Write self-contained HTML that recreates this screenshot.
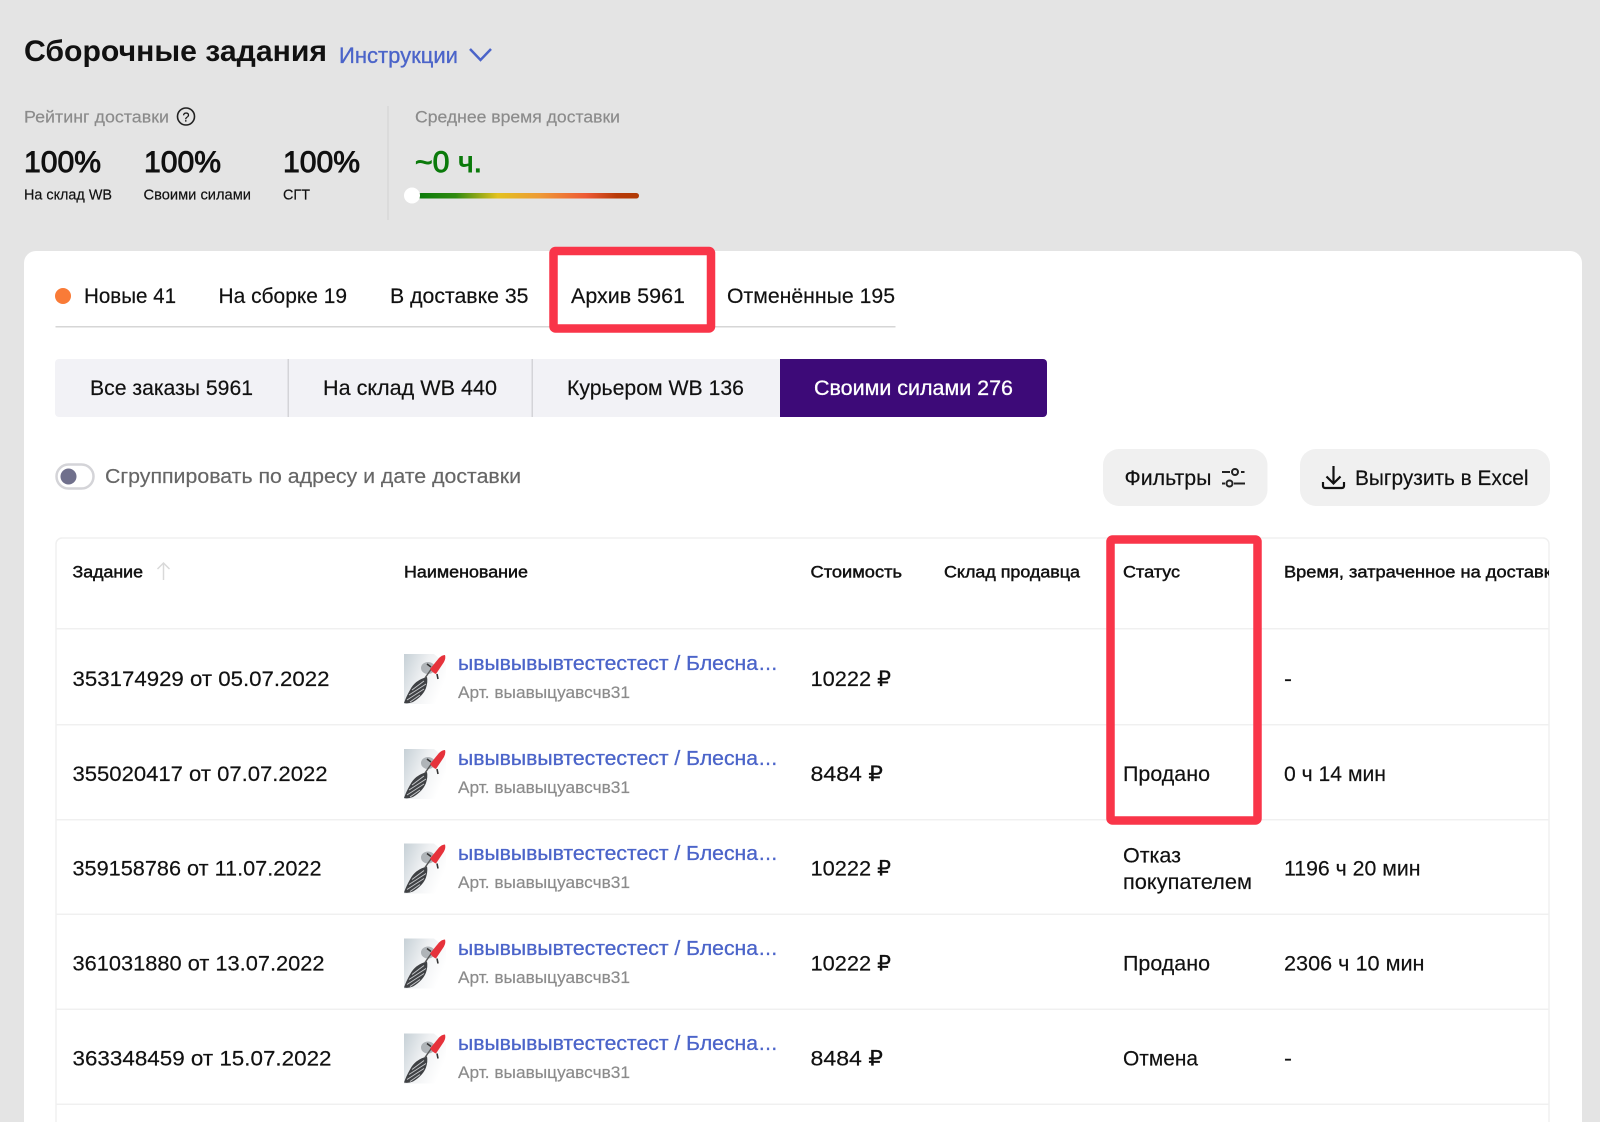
<!DOCTYPE html>
<html lang="ru"><head><meta charset="utf-8"><title>Сборочные задания</title>
<style>
html,body{margin:0;padding:0;background:#e4e4e4;overflow:hidden}
svg{display:block;filter:blur(.35px)}
text{font-family:"Liberation Sans","DejaVu Sans",sans-serif;fill:#111;white-space:pre;stroke:#111;stroke-width:.18}
.m{stroke:#111;stroke-width:.9}
.h{font-size:16.5px;stroke:#111;stroke-width:.45}
.r{font-size:21.5px}
.t{font-size:21px}
.g{font-size:17px;fill:#8b8b8b;stroke:#8b8b8b}
.l{font-size:14.5px}
.link{font-size:20px;fill:#4b64c9;stroke:#4b64c9;stroke-width:.3}
.art{font-size:16.5px;fill:#8b8b8b;stroke:#8b8b8b}
</style></head><body>
<svg width="1600" height="1122" viewBox="0 0 1600 1122" xmlns="http://www.w3.org/2000/svg">
<defs>
<linearGradient id="sl" x1="0" x2="1" y1="0" y2="0">
<stop offset="0" stop-color="#0a7a0a"/><stop offset=".17" stop-color="#2f8a10"/><stop offset=".36" stop-color="#e3c21e"/><stop offset=".55" stop-color="#ee9a35"/><stop offset=".76" stop-color="#ee5a35"/><stop offset=".9" stop-color="#b83a08"/><stop offset="1" stop-color="#b03a05"/>
</linearGradient>
<linearGradient id="th" x1="0" x2="1" y1="0" y2=".5">
<stop offset="0" stop-color="#c6d0d6"/><stop offset=".5" stop-color="#eef0f2"/><stop offset="1" stop-color="#ffffff"/>
</linearGradient>
<clipPath id="tc"><rect x="56" y="538" width="1493" height="584"/></clipPath>
<symbol id="lure" viewBox="0 0 42 50" width="42" height="50">
<path d="M0 0H30L42 10V50H0Z" fill="url(#th)"/>
<ellipse cx="24" cy="14" rx="7" ry="6" fill="#868c91" opacity=".6"/>
<path d="M23 23Q11 26 6 36Q2 43 0 49Q4 50 9 48Q19 42 22 34Q24 28 23 23Z" fill="#3f4144"/>
<path d="M20 27 8 36M22 30 5 41M20 35 3 46M16 41 6 48" stroke="#c4c6c9" stroke-width="1" fill="none"/>
<path d="M21 24 28 14" stroke="#555" stroke-width="1.400"/>
<path d="M26 15 L35 4 Q38 1 41 1 Q42 4 40 8 L32 20 Q29 19 26 15 Z" fill="#e6323b"/>
<path d="M23 10l4 3M33 20l1 5" stroke="#333" stroke-width="1.600" fill="none"/>
</symbol>
</defs>

<rect width="1600" height="1122" fill="#e4e4e4"/>

<!-- Header -->
<text x="24" y="61" font-size="30" font-weight="700" style="stroke-width:0" textLength="303" lengthAdjust="spacingAndGlyphs">Сборочные задания</text>
<text x="339" y="63" font-size="22" style="fill:#4b64c9;stroke:#4b64c9;stroke-width:.3" textLength="119" lengthAdjust="spacingAndGlyphs">Инструкции</text>
<path d="M470 49l10.500 11 10.500-11" fill="none" stroke="#4b64c9" stroke-width="2.500"/>

<text x="24" y="122.500" class="g" textLength="145" lengthAdjust="spacingAndGlyphs">Рейтинг доставки</text>
<circle cx="186" cy="116.500" r="8.500" fill="none" stroke="#222" stroke-width="1.600"/>
<text x="182.500" y="121.500" font-size="13" textLength="7" lengthAdjust="spacingAndGlyphs">?</text>

<text x="24" y="172" font-size="29.500" class="m" textLength="77" lengthAdjust="spacingAndGlyphs">100%</text>
<text x="144" y="172" font-size="29.500" class="m" textLength="77" lengthAdjust="spacingAndGlyphs">100%</text>
<text x="283" y="172" font-size="29.500" class="m" textLength="77" lengthAdjust="spacingAndGlyphs">100%</text>
<text x="24" y="199.500" class="l" textLength="88" lengthAdjust="spacingAndGlyphs">На склад WB</text>
<text x="143.500" y="199.500" class="l" textLength="107.500" lengthAdjust="spacingAndGlyphs">Своими силами</text>
<text x="283" y="199.500" class="l" textLength="27" lengthAdjust="spacingAndGlyphs">СГТ</text>

<rect x="387.500" y="106" width="1" height="114" fill="#d2d2d2"/>
<text x="415" y="122.500" class="g" textLength="205" lengthAdjust="spacingAndGlyphs">Среднее время доставки</text>
<text x="415" y="172" font-size="29.500" style="fill:#0b7a0b;stroke:#0b7a0b;stroke-width:.9" textLength="67" lengthAdjust="spacingAndGlyphs">~0 ч.</text>
<rect x="418" y="193" width="221" height="5.500" rx="2.700" fill="url(#sl)"/>
<circle cx="412" cy="195.500" r="8" fill="#fff"/>

<!-- Card -->
<path d="M36 251H1570a12 12 0 0 1 12 12V1122H24V263a12 12 0 0 1 12-12Z" fill="#fff"/>

<!-- Tabs -->
<circle cx="63" cy="296" r="8" fill="#f97b37"/>
<text x="84" y="303" class="t" textLength="92" lengthAdjust="spacingAndGlyphs">Новые 41</text>
<text x="218.500" y="303" class="t" textLength="128.500" lengthAdjust="spacingAndGlyphs">На сборке 19</text>
<text x="390" y="303" class="t" textLength="138.500" lengthAdjust="spacingAndGlyphs">В доставке 35</text>
<text x="571" y="303" class="t" textLength="114" lengthAdjust="spacingAndGlyphs">Архив 5961</text>
<text x="727" y="303" class="t" textLength="168" lengthAdjust="spacingAndGlyphs">Отменённые 195</text>
<rect x="55.500" y="326" width="840" height="1.500" fill="#d6d6d6"/>

<!-- Segmented -->
<path d="M59 359H780V417H59a4 4 0 0 1-4-4V363a4 4 0 0 1 4-4Z" fill="#f2f2f6"/>
<rect x="287.500" y="359" width="1.500" height="58" fill="#d4d4d8"/>
<rect x="531.500" y="359" width="1.500" height="58" fill="#d4d4d8"/>
<path d="M780 359H1043a4 4 0 0 1 4 4V413a4 4 0 0 1-4 4H780Z" fill="#3d0a78"/>
<text x="90" y="395" class="t" textLength="163" lengthAdjust="spacingAndGlyphs">Все заказы 5961</text>
<text x="323" y="395" class="t" textLength="174" lengthAdjust="spacingAndGlyphs">На склад WB 440</text>
<text x="567" y="395" class="t" textLength="177" lengthAdjust="spacingAndGlyphs">Курьером WB 136</text>
<text x="814" y="395" class="t" style="fill:#fff;stroke:#fff;stroke-width:.3" textLength="199" lengthAdjust="spacingAndGlyphs">Своими силами 276</text>

<!-- Toggle -->
<rect x="56.500" y="464.500" width="37" height="24" rx="12" fill="#fff" stroke="#d4d4d8" stroke-width="2.500"/>
<circle cx="68.500" cy="476.500" r="8" fill="#70708c"/>
<text x="105" y="483" font-size="20.500" style="fill:#666;stroke:#666" textLength="416" lengthAdjust="spacingAndGlyphs">Сгруппировать по адресу и дате доставки</text>

<!-- Buttons -->
<rect x="1103" y="449" width="164.500" height="57" rx="16" fill="#f0f0f0"/>
<text x="1124.500" y="485" class="t" textLength="87" lengthAdjust="spacingAndGlyphs">Фильтры</text>
<g fill="none" stroke="#222" stroke-width="2">
<path d="M1222 472h8M1241 472h3.500M1222 483.500h3M1234 483.500h11"/>
<circle cx="1235" cy="472" r="3"/><circle cx="1229.500" cy="483.500" r="3"/>
</g>
<rect x="1300" y="449" width="250" height="57" rx="16" fill="#f0f0f0"/>
<g fill="none" stroke="#111" stroke-width="2.200">
<path d="M1333.500 466v17M1326.500 476.500l7 7 7-7"/>
<path d="M1323 482v4a2 2 0 0 0 2 2h17a2 2 0 0 0 2-2v-4"/>
</g>
<text x="1355" y="485" class="t" textLength="173.500" lengthAdjust="spacingAndGlyphs">Выгрузить в Excel</text>

<!-- Table -->
<path d="M56 1122V544a6 6 0 0 1 6-6H1543a6 6 0 0 1 6 6V1122" fill="none" stroke="#f0f0f0" stroke-width="1.500"/>
<g fill="#f0f0f0">
<rect x="56" y="628" width="1493" height="1.500"/>
<rect x="56" y="724" width="1493" height="1.500"/>
<rect x="56" y="819" width="1493" height="1.500"/>
<rect x="56" y="913.500" width="1493" height="1.500"/>
<rect x="56" y="1008.500" width="1493" height="1.500"/>
<rect x="56" y="1103.500" width="1493" height="1.500"/>
</g>

<g clip-path="url(#tc)">
<text x="72.500" y="577.500" class="h" textLength="70.500" lengthAdjust="spacingAndGlyphs">Задание</text>
<path d="M163.500 580V563M157.500 569l6-6 6 6" fill="none" stroke="#d9d9d9" stroke-width="1.500"/>
<text x="404" y="577.500" class="h" textLength="124" lengthAdjust="spacingAndGlyphs">Наименование</text>
<text x="810.500" y="577.500" class="h" textLength="91.500" lengthAdjust="spacingAndGlyphs">Стоимость</text>
<text x="944" y="577.500" class="h" textLength="136" lengthAdjust="spacingAndGlyphs">Склад продавца</text>
<text x="1123" y="577.500" class="h" textLength="57" lengthAdjust="spacingAndGlyphs">Статус</text>
<text x="1284" y="577.500" class="h" textLength="277" lengthAdjust="spacingAndGlyphs">Время, затраченное на доставку</text>
</g>

<!-- Row 1 -->
<text x="72.500" y="686" class="r" textLength="257" lengthAdjust="spacingAndGlyphs">353174929 от 05.07.2022</text>
<use href="#lure" x="404" y="654"/>
<text x="458" y="670" class="link" textLength="300" lengthAdjust="spacingAndGlyphs">ывывывывтестестест / Блесна</text>
<text x="759" y="670" class="link" textLength="18">...</text>
<text x="458" y="698" class="art" textLength="172" lengthAdjust="spacingAndGlyphs">Арт. выавыцуавсчв31</text>
<text x="810.500" y="686" class="r" textLength="80.500" lengthAdjust="spacingAndGlyphs">10222 ₽</text>
<text x="1284" y="686" class="r" textLength="8" lengthAdjust="spacingAndGlyphs">-</text>

<!-- Row 2 -->
<text x="72.500" y="781" class="r" textLength="255" lengthAdjust="spacingAndGlyphs">355020417 от 07.07.2022</text>
<use href="#lure" x="404" y="749"/>
<text x="458" y="765" class="link" textLength="300" lengthAdjust="spacingAndGlyphs">ывывывывтестестест / Блесна</text>
<text x="759" y="765" class="link" textLength="18">...</text>
<text x="458" y="793" class="art" textLength="172" lengthAdjust="spacingAndGlyphs">Арт. выавыцуавсчв31</text>
<text x="810.500" y="781" class="r" textLength="72.500" lengthAdjust="spacingAndGlyphs">8484 ₽</text>
<text x="1123" y="781" class="r" textLength="87" lengthAdjust="spacingAndGlyphs">Продано</text>
<text x="1284" y="781" class="r" textLength="102" lengthAdjust="spacingAndGlyphs">0 ч 14 мин</text>

<!-- Row 3 -->
<text x="72.500" y="875.500" class="r" textLength="249" lengthAdjust="spacingAndGlyphs">359158786 от 11.07.2022</text>
<use href="#lure" x="404" y="843.500"/>
<text x="458" y="860" class="link" textLength="300" lengthAdjust="spacingAndGlyphs">ывывывывтестестест / Блесна</text>
<text x="759" y="860" class="link" textLength="18">...</text>
<text x="458" y="888" class="art" textLength="172" lengthAdjust="spacingAndGlyphs">Арт. выавыцуавсчв31</text>
<text x="810.500" y="875.500" class="r" textLength="80.500" lengthAdjust="spacingAndGlyphs">10222 ₽</text>
<text x="1123" y="862.500" class="r" textLength="58" lengthAdjust="spacingAndGlyphs">Отказ</text>
<text x="1123" y="889" class="r" textLength="129" lengthAdjust="spacingAndGlyphs">покупателем</text>
<text x="1284" y="875.500" class="r" textLength="136.500" lengthAdjust="spacingAndGlyphs">1196 ч 20 мин</text>

<!-- Row 4 -->
<text x="72.500" y="970.500" class="r" textLength="252" lengthAdjust="spacingAndGlyphs">361031880 от 13.07.2022</text>
<use href="#lure" x="404" y="938.500"/>
<text x="458" y="955" class="link" textLength="300" lengthAdjust="spacingAndGlyphs">ывывывывтестестест / Блесна</text>
<text x="759" y="955" class="link" textLength="18">...</text>
<text x="458" y="983" class="art" textLength="172" lengthAdjust="spacingAndGlyphs">Арт. выавыцуавсчв31</text>
<text x="810.500" y="970.500" class="r" textLength="80.500" lengthAdjust="spacingAndGlyphs">10222 ₽</text>
<text x="1123" y="970.500" class="r" textLength="87" lengthAdjust="spacingAndGlyphs">Продано</text>
<text x="1284" y="970.500" class="r" textLength="140.500" lengthAdjust="spacingAndGlyphs">2306 ч 10 мин</text>

<!-- Row 5 -->
<text x="72.500" y="1065.500" class="r" textLength="259" lengthAdjust="spacingAndGlyphs">363348459 от 15.07.2022</text>
<use href="#lure" x="404" y="1033.500"/>
<text x="458" y="1050" class="link" textLength="300" lengthAdjust="spacingAndGlyphs">ывывывывтестестест / Блесна</text>
<text x="759" y="1050" class="link" textLength="18">...</text>
<text x="458" y="1078" class="art" textLength="172" lengthAdjust="spacingAndGlyphs">Арт. выавыцуавсчв31</text>
<text x="810.500" y="1065.500" class="r" textLength="72.500" lengthAdjust="spacingAndGlyphs">8484 ₽</text>
<text x="1123" y="1065.500" class="r" textLength="75" lengthAdjust="spacingAndGlyphs">Отмена</text>
<text x="1284" y="1065.500" class="r" textLength="8" lengthAdjust="spacingAndGlyphs">-</text>

<!-- Red highlight boxes -->
<rect x="553.500" y="251" width="157.500" height="77.500" rx="2" fill="none" stroke="#f93549" stroke-width="8.500"/>
<rect x="1110.500" y="539.500" width="147" height="281" rx="2" fill="none" stroke="#f93549" stroke-width="8.500"/>
</svg>
</body></html>
